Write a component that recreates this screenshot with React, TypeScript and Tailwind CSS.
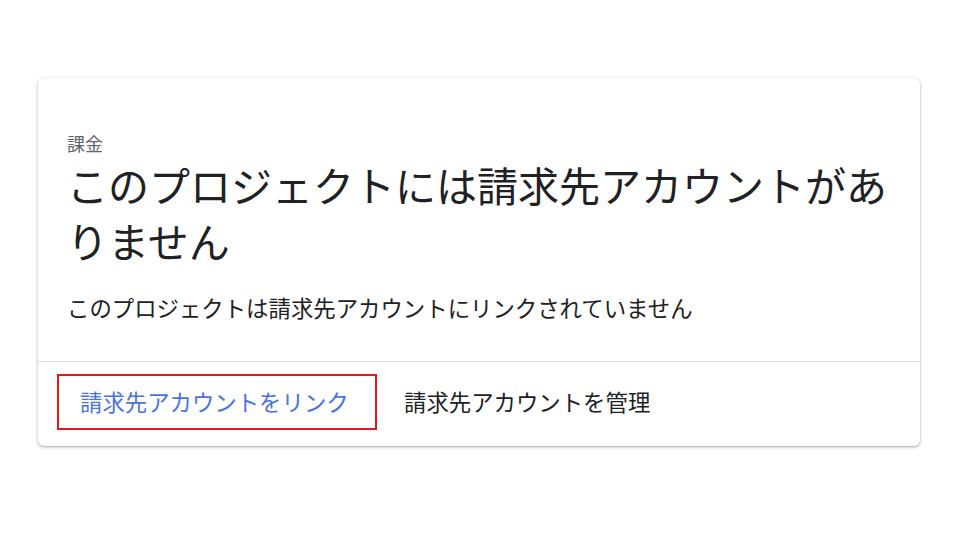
export default function App() {
  return (
    <div
      className="min-h-screen w-full bg-white pt-[78px]"
      style={{ fontFamily: '"Noto Sans CJK JP", "Noto Sans", sans-serif' }}
    >
      {/* Billing card */}
      <div className="ml-[38px] w-[882px] rounded-[6px] bg-white shadow-[0_1px_2px_rgba(60,64,67,0.3),0_1px_3px_1px_rgba(60,64,67,0.15)]">
        <div className="px-[29px] pt-[55px] pb-[39px]">
          <div className="mb-[3px] text-[18px] leading-[20px] text-[#5f6368]">課金</div>
          <h1 className="text-[41px] leading-[56px] font-normal text-[#202124]">
            このプロジェクトには請求先アカウントがありません
          </h1>
          <p className="mt-[24px] text-[22.4px] leading-[30px] text-[#202124]">
            このプロジェクトは請求先アカウントにリンクされていません
          </p>
        </div>

        <div className="flex items-center border-t border-[#e0e0e0] pl-[19px] pt-[12px] pb-[16px]">
          <button className="h-[56px] w-[320px] border-2 border-[#e8151b] pl-[21px] text-left text-[22.4px] text-[#4a72e0]">
            請求先アカウントをリンク
          </button>
          <button className="h-[56px] px-[27px] text-[22.4px] text-[#202124]">
            請求先アカウントを管理
          </button>
        </div>
      </div>
    </div>
  );
}
